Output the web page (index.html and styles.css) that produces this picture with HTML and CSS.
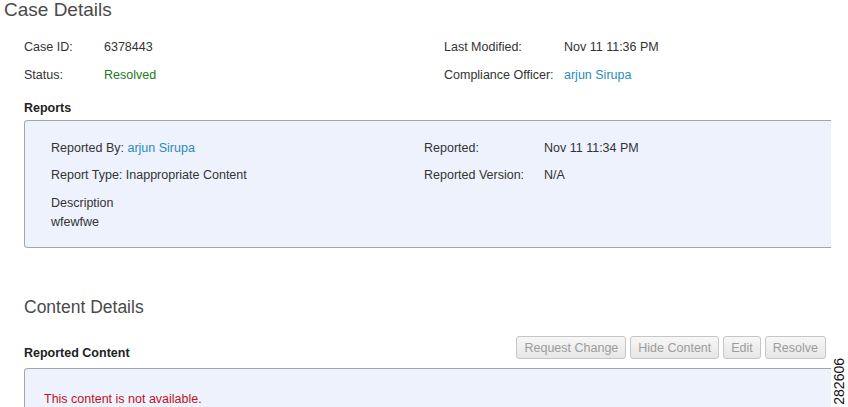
FILE: index.html
```html
<!DOCTYPE html>
<html>
	<head>
		<meta charset="utf-8">
		<title>Case Details</title>
		<link rel="stylesheet" href="styles.css">
	</head>
	<body>
		<div class="page">
			<!-- 案件信息 -->
			<h1 class="case-title">Case Details</h1>
			<div class="info-grid">
				<span class="label">Case ID:</span>
				<span class="value">6378443</span>
				<span class="label">Last Modified:</span>
				<span class="value">Nov 11 11:36 PM</span>

				<span class="label">Status:</span>
				<span class="value status">Resolved</span>
				<span class="label">Compliance Officer:</span>
				<span class="value"><a class="user" href="javascript:;">arjun Sirupa</a></span>
			</div>

			<!-- 举报 -->
			<div class="sub-title">Reports</div>
			<div class="panel report-panel">
				<div class="report-grid">
					<div class="cell">Reported By: <a class="user" href="javascript:;">arjun Sirupa</a></div>
					<span class="label">Reported:</span>
					<span class="value">Nov 11 11:34 PM</span>

					<div class="cell">Report Type: Inappropriate Content</div>
					<span class="label">Reported Version:</span>
					<span class="value">N/A</span>
				</div>
				<div class="desc">
					<div>Description</div>
					<div>wfewfwe</div>
				</div>
			</div>

			<!-- 内容 -->
			<h2 class="content-title">Content Details</h2>
			<div class="content-bar">
				<div class="sub-title bar-label">Reported Content</div>
				<div class="buttons">
					<button class="btn" disabled>Request Change</button>
					<button class="btn" disabled>Hide Content</button>
					<button class="btn" disabled>Edit</button>
					<button class="btn" disabled>Resolve</button>
				</div>
			</div>
			<div class="panel content-panel">
				<div class="not-available">This content is not available.</div>
			</div>
		</div>
		<!-- 图号 -->
		<div class="fig-num">282606</div>
	</body>
</html>
```

FILE: styles.css
```css
*{
	margin: 0px;padding: 0px;
}
html,body{
	width: 848px;height: 407px;
	overflow: hidden;
	background-color: #fff;
}
body{
	font-family: "Liberation Sans", Arial, sans-serif;
	font-size: 12.5px;
	color: #333;
	position: relative;
}
.page{
	padding: 0 17px 0 24px;
}
a.user{
	color: #2a8bbb;
	text-decoration: none;
}

/* 标题 */
.case-title{
	margin-left: -20px;
	font-size: 19px;
	font-weight: normal;
	line-height: 20px;
	color: #4a4a4a;
}
.content-title{
	margin-top: 48px;
	font-size: 17.5px;
	font-weight: normal;
	line-height: 22px;
	color: #4a4a4a;
}

/* 案件信息 */
.info-grid{
	display: grid;
	grid-template-columns: 80px 340px 120px 1fr;
	grid-auto-rows: 28px;
	align-items: center;
	margin-top: 13px;
	line-height: 16px;
}
.status{
	color: #217a21;
}

.sub-title{
	font-weight: bold;
	line-height: 16px;
	color: #222;
}
.page > .sub-title{
	margin: 11px 0 4px;
}

/* 面板 */
.panel{
	background-color: #eef2fd;
	border: 1px solid #a3a3ab;
	border-right: none;
	border-radius: 4px 0 0 4px;
}
.report-panel{
	height: 128px;
	padding: 13px 0 0 26px;
	box-sizing: border-box;
}
.report-grid{
	display: grid;
	grid-template-columns: 373px 120px 1fr;
	grid-auto-rows: 27px;
	align-items: center;
	line-height: 16px;
}
.desc{
	margin-top: 6px;
	line-height: 19px;
}

/* 按钮栏 */
.content-bar{
	display: flex;
	justify-content: space-between;
	align-items: flex-end;
	margin-top: 18px;
	padding-right: 5px;
}
.bar-label{
	margin-bottom: -2px;
}
.buttons{
	display: flex;
	gap: 4px;
}
.btn{
	height: 23px;
	padding: 0 7px;
	font-family: inherit;
	font-size: 12.5px;
	color: #9c9c9c;
	background: linear-gradient(#f7f7f7, #e6e6e6);
	border: 1px solid #c6c6c6;
	border-radius: 3px;
}
.content-panel{
	margin-top: 9px;
	border-bottom: none;
	border-radius: 4px 0 0 0;
	padding: 23px 0 0 19px;
}
.not-available{
	line-height: 15px;
	color: #c0121c;
}

/* 图号(竖排) */
.fig-num{
	position: absolute;
	right: 2px;
	bottom: 2px;
	writing-mode: vertical-rl;
	transform: rotate(180deg);
	font-size: 14px;
	line-height: 14px;
	color: #111;
}
```
